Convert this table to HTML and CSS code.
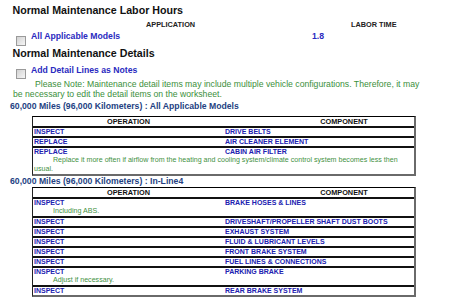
FILE: index.html
```html
<!DOCTYPE html>
<html>
<head>
<meta charset="utf-8">
<link rel="stylesheet" href="styles.css">
</head>
<body>
<div class="page">
  <h1 class="title">Normal Maintenance Labor Hours</h1>
  <div class="cols"><span class="c-app">APPLICATION</span><span class="c-lt">LABOR TIME</span></div>
  <div class="opt opt-a"><span class="cb"></span><a class="lbl">All Applicable Models</a><span class="hrs">1.8</span></div>
  <h1 class="title">Normal Maintenance Details</h1>
  <div class="opt opt-b"><span class="cb"></span><a class="lbl">Add Detail Lines as Notes</a></div>
  <p class="pnote">Please Note: Maintenance detail items may include multiple vehicle configurations. Therefore, it may be necessary to edit the detail items on the worksheet.</p>

  <h2 class="sect sect-a">60,000 Miles (96,000 Kilometers) : All Applicable Models</h2>
  <div class="tbl">
    <div class="thead"><div>OPERATION</div><div class="th-comp">COMPONENT</div></div>
    <div class="row"><div>INSPECT</div><div>DRIVE BELTS</div></div>
    <div class="row"><div>REPLACE</div><div>AIR CLEANER ELEMENT</div></div>
    <div class="row"><div>REPLACE</div><div>CABIN AIR FILTER</div><div class="rnote">Replace it more often if airflow from the heating and cooling system/climate control system becomes less then usual.</div></div>
  </div>

  <h2 class="sect sect-b">60,000 Miles (96,000 Kilometers) : In-Line4</h2>
  <div class="tbl">
    <div class="thead"><div>OPERATION</div><div class="th-comp">COMPONENT</div></div>
    <div class="row"><div>INSPECT</div><div>BRAKE HOSES &amp; LINES</div><div class="rnote">Including ABS.</div></div>
    <div class="row"><div>INSPECT</div><div>DRIVESHAFT/PROPELLER SHAFT DUST BOOTS</div></div>
    <div class="row"><div>INSPECT</div><div>EXHAUST SYSTEM</div></div>
    <div class="row"><div>INSPECT</div><div>FLUID &amp; LUBRICANT LEVELS</div></div>
    <div class="row"><div>INSPECT</div><div>FRONT BRAKE SYSTEM</div></div>
    <div class="row"><div>INSPECT</div><div>FUEL LINES &amp; CONNECTIONS</div></div>
    <div class="row"><div>INSPECT</div><div>PARKING BRAKE</div><div class="rnote">Adjust if necessary.</div></div>
    <div class="row"><div>INSPECT</div><div>REAR BRAKE SYSTEM</div></div>
  </div>
</div>
</body>
</html>
```

FILE: styles.css
```css
html, body {
  margin: 0;
  padding: 0;
  background: #ffffff;
}

.page {
  padding-top: 4px;
  font-family: "Liberation Sans", Arial, sans-serif;
  width: 450px;
}

.title {
  margin: 0;
  padding-left: 12.5px;
  font-size: 10.67px;
  line-height: 13px;
  font-weight: bold;
  color: #111;
}

.cols {
  display: flex;
  margin-top: 3px;
  padding-left: 146px;
  font-size: 7.33px;
  line-height: 9px;
  font-weight: bold;
  color: #222;
}

.c-app {
  width: 205px;
}

.opt {
  display: flex;
  align-items: flex-start;
  padding-left: 16px;
}

.opt-a {
  height: 18px;
}

.opt-b {
  margin-top: 3px;
  height: 16px;
}

.cb {
  width: 8px;
  height: 8px;
  border: 1px solid #9a9a9a;
  background: linear-gradient(135deg, #d2d2d2, #f6f6f6);
  margin-top: 7px;
  flex: none;
}

.opt-b .cb {
  margin-top: 6px;
}

.lbl {
  margin-left: 5px;
  margin-top: 2px;
  font-size: 8.67px;
  line-height: 11px;
  font-weight: bold;
  color: #2a2ac0;
  width: 281px;
}

.hrs {
  margin-top: 2px;
  font-size: 8.67px;
  line-height: 11px;
  font-weight: bold;
  color: #2a2ac0;
}

.pnote {
  margin: 0;
  padding-left: 13px;
  width: 412px;
  text-indent: 22px;
  font-size: 8.67px;
  line-height: 10px;
  color: #3b8f3b;
}

.sect {
  margin: 0;
  padding-left: 10px;
  font-size: 8.67px;
  line-height: 11px;
  font-weight: bold;
  color: #243f82;
}

.sect-a {
  margin-top: 2px;
  margin-bottom: 4px;
}

.tbl {
  margin-left: 32px;
  width: 381px;
  border-top: 1px solid #000;
  border-left: 1px solid #222;
  border-right: 2px solid #6a6a6a;
  border-bottom: 2px solid #6a6a6a;
  font-size: 7px;
  font-weight: bold;
}

.thead {
  display: grid;
  grid-template-columns: 191px 1fr;
  line-height: 9px;
  font-size: 7.33px;
  color: #111;
  text-align: center;
}

.th-comp {
  padding-left: 50px;
}

.row {
  display: grid;
  grid-template-columns: 191px 1fr;
  border-top: 2px solid #111;
  line-height: 8px;
  color: #2020b0;
}

.row > div {
  padding-left: 1px;
}

.rnote {
  grid-column: 1 / -1;
  font-weight: normal;
  font-size: 7.1px;
  line-height: 8.5px;
  padding-bottom: 0.5px;
  text-indent: 19px;
  color: #3f913f;
}
```
